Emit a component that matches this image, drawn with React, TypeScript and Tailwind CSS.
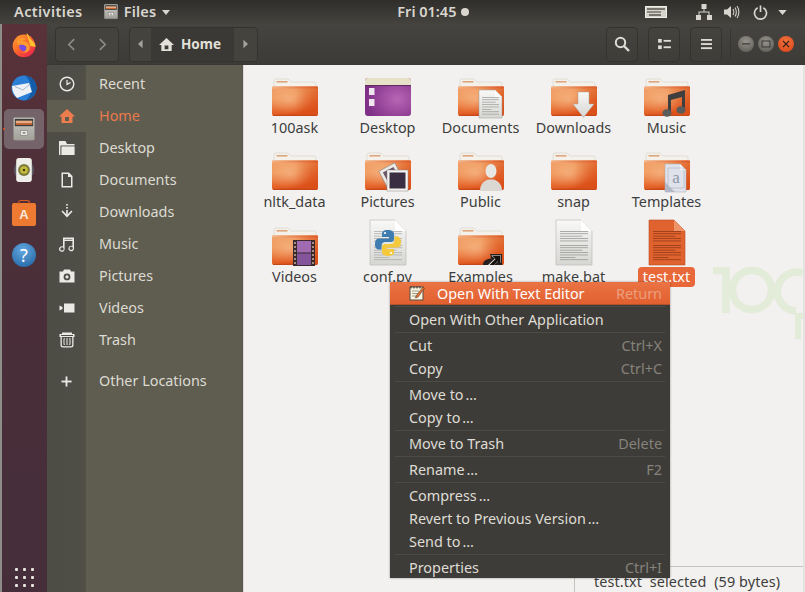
import React from "react";

const Defs = () => (
  <svg className="absolute w-0 h-0">
    <defs>
      <linearGradient id="fold" x1="0" y1="0" x2="0.35" y2="1">
        <stop offset="0" stopColor="#f2a26b" />
        <stop offset="0.4" stopColor="#ee9356" />
        <stop offset="0.75" stopColor="#e66a30" />
        <stop offset="1" stopColor="#dd5019" />
      </linearGradient>
      <radialGradient id="foldHi" cx="0.38" cy="0.45" r="0.5">
        <stop offset="0" stopColor="#ffd9b0" stopOpacity="0.45" />
        <stop offset="1" stopColor="#ffd9b0" stopOpacity="0" />
      </radialGradient>
      <linearGradient id="foldRight" x1="0" y1="0" x2="1" y2="0">
        <stop offset="0.5" stopColor="#d9501a" stopOpacity="0" />
        <stop offset="1" stopColor="#d9501a" stopOpacity="0.6" />
      </linearGradient>
      <linearGradient id="foldTop" x1="0" y1="0" x2="1" y2="0">
        <stop offset="0" stopColor="#f3b385" />
        <stop offset="1" stopColor="#dd5a26" />
      </linearGradient>
      <radialGradient id="purp" cx="0.7" cy="0.55" r="0.7">
        <stop offset="0" stopColor="#b865b5" />
        <stop offset="1" stopColor="#7e2f86" />
      </radialGradient>
      <linearGradient id="page" x1="0" y1="0" x2="0" y2="1">
        <stop offset="0" stopColor="#f8f8f7" />
        <stop offset="1" stopColor="#d6d6d3" />
      </linearGradient>
      <linearGradient id="ffx" x1="0" y1="0" x2="0.8" y2="1">
        <stop offset="0" stopColor="#ffa52e" />
        <stop offset="0.5" stopColor="#ff6a2b" />
        <stop offset="1" stopColor="#e6214f" />
      </linearGradient>
      <radialGradient id="winbtn" cx="0.5" cy="0.35" r="0.7">
        <stop offset="0" stopColor="#96948c" />
        <stop offset="1" stopColor="#5f5d57" />
      </radialGradient>
      <radialGradient id="winclose" cx="0.5" cy="0.35" r="0.7">
        <stop offset="0" stopColor="#f3743f" />
        <stop offset="1" stopColor="#d9481a" />
      </radialGradient>
      <linearGradient id="drawer" x1="0" y1="0" x2="0" y2="1">
        <stop offset="0" stopColor="#c9c8c2" />
        <stop offset="1" stopColor="#a09f98" />
      </linearGradient>
    </defs>
  </svg>
);

const IconBox = ({ children }: { children: React.ReactNode }) => (
  <svg viewBox="0 0 46 48" className="w-[46px] h-[48px] overflow-visible shrink-0">
    {children}
  </svg>
);

const FolderBase = () => (
  <>
    <path d="M2 20V13a2 2 0 0 1 2-2h12l3 3h23a2 2 0 0 1 2 2v4z" fill="#f4f1ea" stroke="#cfc9bd" strokeWidth="0.5" />
    <rect x="4.5" y="13" width="11" height="1.6" fill="#dda67e" />
    <rect x="0" y="18.5" width="46" height="29.5" rx="2" fill="url(#fold)" />
    <rect x="0" y="18.5" width="46" height="29.5" rx="2" fill="url(#foldHi)" />
    <rect x="0" y="18.5" width="46" height="29.5" rx="2" fill="url(#foldRight)" />
    <rect x="0" y="18.5" width="46" height="2" fill="url(#foldTop)" />
    <rect x="1" y="46.8" width="44" height="1.2" fill="#c4481a" />
  </>
);

const Folder = ({ children }: { children?: React.ReactNode }) => (
  <IconBox>
    <FolderBase />
    {children}
  </IconBox>
);

const TextLines = ({ x, y, w, n, color, gap = 2.4 }: { x: number; y: number; w: number; n: number; color: string; gap?: number }) => (
  <>
    {Array.from({ length: n }).map((_, i) => (
      <rect key={i} x={x} y={y + i * gap} width={i % 6 === 5 ? w * 0.55 : i % 3 === 2 ? w * 0.8 : w} height="0.7" fill={color} />
    ))}
  </>
);

const PageIcon = ({ fill, fold, stroke, line, children }: { fill: string; fold: string; stroke: string; line: string; children?: React.ReactNode }) => (
  <IconBox>
    <path d="M5 3H30L41 14V48H5Z" fill={fill} stroke={stroke} strokeWidth="0.6" />
    <path d="M30 3V14H41Z" fill={fold} />
    <TextLines x={9} y={14} w={28} n={5} color={line} />
    <TextLines x={9} y={28} w={28} n={7} color={line} />
    {children}
  </IconBox>
);

const PY_BLUE = "M0 -13C-5 -13 -6 -11 -6 -9V-6H1V-4.5H-9C-12 -4.5 -13 -2 -13 1C-13 4 -12 6.5 -9 6.5H-6.5V3C-6.5 .5 -5 -1 -2.5 -1H3C5 -1 6 -2.5 6 -4V-9C6 -11 4 -13 0 -13Z";

const files: { label: string; icon: React.ReactNode; selected?: boolean }[] = [
  { label: "100ask", icon: <Folder /> },
  {
    label: "Desktop",
    icon: (
      <IconBox>
        <rect x="0" y="10" width="46" height="38" rx="3" fill="url(#purp)" />
        <path d="M0 13a3 3 0 0 1 3-3h40a3 3 0 0 1 3 3v4H0z" fill="#e6e2c8" />
        <rect x="0" y="17" width="46" height="1" fill="#5f2a63" />
        <rect x="4" y="20" width="5.5" height="7" fill="#efe6ef" />
        <rect x="4" y="31" width="5.5" height="7" fill="#efe6ef" />
      </IconBox>
    ),
  },
  {
    label: "Documents",
    icon: (
      <Folder>
        <path d="M21 22H37L44 29V50H21Z" fill="url(#page)" stroke="#9a9a96" strokeWidth="0.5" />
        <path d="M37 22V29H44Z" fill="#fff" />
        <TextLines x={24} y={29} w={17} n={8} color="#9b9b98" />
      </Folder>
    ),
  },
  {
    label: "Downloads",
    icon: (
      <Folder>
        <polygon points="27,24 38,24 38,36 43,36 32.5,49.5 22,36 27,36" fill="url(#page)" stroke="#a8a59f" strokeWidth="0.5" />
      </Folder>
    ),
  },
  {
    label: "Music",
    icon: (
      <Folder>
        <path d="M24 27L41 22V42H38V29L27 32V45H24Z" fill="#3f3f3f" />
        <ellipse cx="23" cy="45" rx="4.5" ry="3.8" fill="#5b5b5b" />
        <ellipse cx="37" cy="42" rx="4.5" ry="3.8" fill="#5b5b5b" />
      </Folder>
    ),
  },
  { label: "nltk_data", icon: <Folder /> },
  {
    label: "Pictures",
    icon: (
      <Folder>
        <rect x="17" y="24" width="18" height="18" transform="rotate(-28 26 33)" fill="#eeeae6" stroke="#777" strokeWidth="0.5" />
        <rect x="20" y="27" width="12" height="12" transform="rotate(-28 26 33)" fill="#6a5468" />
        <rect x="22" y="28" width="21" height="21" fill="#f5f3ef" stroke="#888" strokeWidth="0.5" />
        <rect x="24.5" y="30.5" width="16" height="16" fill="#3a2f42" />
      </Folder>
    ),
  },
  {
    label: "Public",
    icon: (
      <Folder>
        <ellipse cx="33" cy="29" rx="5.5" ry="7" fill="#e8e6e2" />
        <path d="M22 49C22 42 26 39 30 37.5H36C40 39 44 42 44 49Z" fill="#dbd8d3" />
      </Folder>
    ),
  },
  { label: "snap", icon: <Folder /> },
  {
    label: "Templates",
    icon: (
      <Folder>
        <path d="M21 22H36L42 28V50H21Z" fill="#dfe2ea" stroke="#a6aab6" strokeWidth="0.5" />
        <path d="M36 22V28H42Z" fill="#f5f6f9" />
        <rect x="24" y="26" width="16" height="20" fill="none" stroke="#aab0c0" strokeWidth="0.6" />
        <text x="32" y="41" fontSize="17" fill="#8f96a8" textAnchor="middle" fontFamily="'Liberation Serif', serif">a</text>
        <path d="M21 40L31 50H21Z" fill="#b2b7c6" />
      </Folder>
    ),
  },
  {
    label: "Videos",
    icon: (
      <Folder>
        <rect x="21" y="23" width="22" height="26" fill="#3a2a30" />
        <rect x="25" y="24" width="14" height="11.5" fill="#a06bb0" />
        <rect x="25" y="36.5" width="14" height="11.5" fill="#84559a" />
        <g fill="#a89080">
          {[25, 29, 33, 37, 41, 45].map((y) => (
            <React.Fragment key={y}>
              <rect x="22" y={y} width="2" height="2" />
              <rect x="40" y={y} width="2" height="2" />
            </React.Fragment>
          ))}
        </g>
      </Folder>
    ),
  },
  {
    label: "conf.py",
    icon: (
      <PageIcon fill="url(#page)" fold="#fff" stroke="#b5b5b2" line="#a8a8a5">
        <g transform="translate(23 26)">
          <path d={PY_BLUE} fill="#3f7cb0" />
          <circle cx="-3" cy="-10" r="1.1" fill="#fff" />
          <g transform="rotate(180)">
            <path d={PY_BLUE} fill="#f4c93d" />
            <circle cx="-3" cy="-10" r="1.1" fill="#fff" />
          </g>
        </g>
      </PageIcon>
    ),
  },
  {
    label: "Examples",
    icon: (
      <Folder>
        <path d="M32 37H44V48H25C25 44 28 42 33 41.5Z" fill="#26201e" />
        <path d="M33 38.5H43V46L40.5 44L36 48H30L37 41.5Z" fill="#f4f0ee" />
        <path d="M34.5 39H42.5V47L39.8 44.3L36 48H31.5L37.5 42Z" fill="#15110f" />
      </Folder>
    ),
  },
  { label: "make.bat", icon: <PageIcon fill="url(#page)" fold="#fff" stroke="#b5b5b2" line="#8f8f8c" /> },
  { label: "test.txt", selected: true, icon: <PageIcon fill="#e0632f" fold="#ef9468" stroke="#b84c1f" line="#8a3614" /> },
];

const S = ({ children }: { children: React.ReactNode }) => (
  <svg viewBox="0 0 16 16" className="w-4 h-4" fill="currentColor">
    {children}
  </svg>
);

const sidebar: { label: string; icon: React.ReactNode; active?: boolean }[] = [
  {
    label: "Recent",
    icon: (
      <S>
        <circle cx="8" cy="8" r="6.8" fill="none" stroke="currentColor" strokeWidth="1.4" />
        <path d="M8 4V8.4L11.5 6.5" fill="none" stroke="currentColor" strokeWidth="1.2" />
      </S>
    ),
  },
  {
    label: "Home",
    active: true,
    icon: (
      <S>
        <path fillRule="evenodd" d="M8 1L16 8.5H13.5V15H2.5V8.5H0ZM6 9V13H10V9Z" />
      </S>
    ),
  },
  {
    label: "Desktop",
    icon: (
      <S>
        <path d="M0 1H6.5L8 4H15.5V5.4H1.4V15H0Z" />
        <rect x="2.4" y="6.4" width="13.2" height="8.6" />
      </S>
    ),
  },
  {
    label: "Documents",
    icon: (
      <S>
        <path fillRule="evenodd" d="M2.5 0.5H10L13.5 4V15.5H2.5ZM4 2V14H12V5H9V2Z" />
      </S>
    ),
  },
  {
    label: "Downloads",
    icon: (
      <S>
        <rect x="7.2" y="0" width="1.6" height="1.6" />
        <rect x="7.2" y="3" width="1.6" height="1.6" />
        <rect x="7.2" y="6" width="1.6" height="5" />
        <path d="M2.5 7.5L8 13.5L13.5 7.5L12.4 6.5L8 11L3.6 6.5Z" />
      </S>
    ),
  },
  {
    label: "Music",
    icon: (
      <S>
        <path fillRule="evenodd" d="M4 1.5H15V12.5A2.8 2.8 0 1 1 13.4 10V5H5.6V13A2.8 2.8 0 1 1 4 10.5ZM5.6 3V3.6H13.4V3ZM3 11.2A1.7 1.7 0 1 0 3 14.6A1.7 1.7 0 1 0 3 11.2ZM12.2 10.6A1.7 1.7 0 1 0 12.2 14A1.7 1.7 0 1 0 12.2 10.6Z" />
      </S>
    ),
  },
  {
    label: "Pictures",
    icon: (
      <S>
        <path fillRule="evenodd" d="M5 1.5H11L12 3.5H15.5V14.5H0.5V3.5H4ZM8 5.5A3.4 3.4 0 1 0 8 12.3A3.4 3.4 0 1 0 8 5.5Z" />
        <circle cx="8" cy="8.9" r="1.6" />
      </S>
    ),
  },
  {
    label: "Videos",
    icon: (
      <S>
        <rect x="5" y="3.5" width="10.5" height="9" />
        <path d="M0.5 5.5L3.5 7V9L0.5 10.5Z" />
      </S>
    ),
  },
  {
    label: "Trash",
    icon: (
      <S>
        <path fillRule="evenodd" d="M3 0.5H13V2H15.5V5H14.5V13A2.5 2.5 0 0 1 12 15.5H4A2.5 2.5 0 0 1 1.5 13V5H0.5V2H3ZM2.8 5V13A1.2 1.2 0 0 0 4 14.2H12A1.2 1.2 0 0 0 13.2 13V5ZM2 3V4H14V3Z" />
        <path d="M4.8 6C4.3 8.5 4.3 10.5 4.8 13H5.8C5.3 10.5 5.3 8.5 5.8 6ZM7.5 6V13H8.5V6ZM10.2 6C10.7 8.5 10.7 10.5 10.2 13H11.2C11.7 10.5 11.7 8.5 11.2 6Z" />
      </S>
    ),
  },
];

const FilesIcon = ({ size }: { size: number }) => (
  <svg viewBox="0 0 24 26" width={size} height={size * 26 / 24}>
    <rect x="0.5" y="0.5" width="23" height="25" rx="1.5" fill="url(#drawer)" stroke="#8b8a83" strokeWidth="0.5" />
    <rect x="2" y="2" width="20" height="8" fill="#3c3b38" />
    <rect x="3" y="4" width="18" height="3" fill="#e9ad84" />
    <rect x="3" y="7" width="18" height="1.5" fill="#e26b2f" />
    <rect x="8" y="15" width="8" height="5" fill="#e8e7e2" stroke="#77766f" strokeWidth="0.6" />
    <rect x="10.5" y="16.8" width="3" height="1.2" fill="#55544e" />
  </svg>
);

const Dock = () => (
  <div className="w-[45px] shrink-0 h-full pr-[1px] flex flex-col items-center bg-[linear-gradient(180deg,#5a3239_0%,#4c2f39_30%,#452e3a_100%)]">
    <div className="h-[42px] flex items-center justify-center">
      <svg viewBox="0 0 26 26" className="w-[25px] h-[26px]">
        <circle cx="12.5" cy="14" r="11.8" fill="url(#ffx)" />
        <path d="M15 0.5C18 2.5 17.5 5.5 20 7.5C23 10 24.5 12 24.5 15L19 14Z" fill="#ffc02e" />
        <circle cx="12.5" cy="14.5" r="5" fill="#7a4be0" />
        <path d="M5 8.5C8 5.5 12 5 15 7C12.5 7 11 8 11 9.2C14 9 18.5 11 18.5 15.5C18.5 19.5 14.5 21.5 10.5 20.5C13.5 20 15.5 18 14.8 15C14 12.5 9 12.5 5.5 13Z" fill="#ff9a2e" />
      </svg>
    </div>
    <div className="h-[43px] flex items-center justify-center">
      <svg viewBox="0 0 26 26" className="w-[26px] h-[26px]">
        <circle cx="13" cy="13" r="12.5" fill="#2c7fd6" />
        <path d="M14 0.5C20 1 25.5 6 25.5 13C25.5 19 21 23.5 15 25.5C19 21 21 17 20 11C19.5 7 17 3 14 0.5Z" fill="#155ca8" />
        <path d="M1 11L18 8L21 17L6 23C3 20 1 16 1 11Z" fill="#eef2f7" />
        <path d="M4 11.5L12 15L19 9" fill="none" stroke="#a9b8cb" strokeWidth="1" />
      </svg>
    </div>
    <div className="w-[40px] h-[40px] shrink-0 rounded-[5px] bg-[#75636a] flex items-center justify-center relative">
      <span className="absolute left-[-1px] top-[19px] w-[2px] h-[2px] rounded-full bg-[#e95420]" />
      <FilesIcon size={22} />
    </div>
    <div className="h-[42px] flex items-center justify-center">
      <svg viewBox="0 0 24 28" className="w-[22px] h-[26px]">
        <circle cx="12" cy="14" r="11" fill="#5f5a66" />
        <rect x="3.5" y="1" width="17" height="26" rx="3" fill="#efefe9" />
        <circle cx="12" cy="14" r="6.5" fill="#7d7a3d" />
        <circle cx="12" cy="14" r="4.2" fill="#c7bb3a" />
        <circle cx="12" cy="14" r="1.4" fill="#3e3c1e" />
      </svg>
    </div>
    <div className="h-[45px] flex items-center justify-center">
      <div className="relative w-[24px] h-[23px] mt-[2px] rounded-[2px] bg-[#ed7a30] flex items-center justify-center">
        <span className="absolute top-[-3px] left-[6px] w-[12px] h-[4px] rounded-t-[3px] border-[1.5px] border-b-0 border-[#d9591f]" />
        <span className="text-[13px] font-bold text-[#fbe9dc] font-['Liberation_Sans',sans-serif] leading-none">A</span>
      </div>
    </div>
    <div className="h-[38px] flex items-center justify-center">
      <div className="w-[24px] h-[24px] rounded-full bg-[radial-gradient(circle_at_45%_30%,#63a9e0,#1c5d9e)] flex items-center justify-center text-white text-[18px] leading-none font-['Noto_Sans',sans-serif]">?</div>
    </div>
    <div className="mt-auto mb-[5px] grid grid-cols-3 gap-x-[5px] gap-y-[5px]">
      {Array.from({ length: 9 }).map((_, i) => (
        <span key={i} className="w-[3px] h-[3px] bg-[#e6e4df] rounded-[1px]" />
      ))}
    </div>
  </div>
);

const HeaderBtn = ({ children }: { children: React.ReactNode }) => (
  <div className="w-[32px] h-[35px] rounded-[4px] border border-[#35332f] bg-[linear-gradient(180deg,#45433e,#3f3d39)] flex items-center justify-center text-[#dedcd5]">
    {children}
  </div>
);

const WinBtn = ({ fill, children }: { fill: string; children: React.ReactNode }) => (
  <svg viewBox="0 0 16 16" className="w-4 h-4">
    <circle cx="8" cy="8" r="8" fill={fill} />
    {children}
  </svg>
);

const Header = () => (
  <div className="h-[41px] shrink-0 flex items-center pl-[8px] pr-[11px] bg-[linear-gradient(180deg,#464440,#3d3b37)] border-b border-[#3a3834]">
    <div className="w-[64px] h-[35px] rounded-[4px] border border-[#35332f] bg-[#45433e] flex items-center justify-around text-[#8e8c85]">
      <svg viewBox="0 0 10 14" className="w-[9px] h-[13px]" fill="none" stroke="currentColor" strokeWidth="1.8"><path d="M8 1L2 7L8 13" /></svg>
      <svg viewBox="0 0 10 14" className="w-[9px] h-[13px]" fill="none" stroke="currentColor" strokeWidth="1.8"><path d="M2 1L8 7L2 13" /></svg>
    </div>
    <div className="ml-[10px] w-[129px] h-[35px] rounded-[4px] border border-[#35332f] bg-[#45433e] flex items-center">
      <div className="w-[21px] flex justify-center text-[#a5a39c]">
        <svg viewBox="0 0 6 10" className="w-[5px] h-[10px]" fill="currentColor"><path d="M5.5 0V10L0 5Z" /></svg>
      </div>
      <div className="w-[83px] h-full bg-[#3b3935] flex items-center pl-[8px] gap-[7px] text-[#e2e0d9]">
        <svg viewBox="0 0 16 16" className="w-[15px] h-[15px]" fill="currentColor"><path fillRule="evenodd" d="M8 1L16 8.5H13.5V15H2.5V8.5H0ZM6 9V13H10V9Z" /></svg>
        <span className="font-bold text-[13.5px]">Home</span>
      </div>
      <div className="flex-1 flex justify-center text-[#a5a39c]">
        <svg viewBox="0 0 6 10" className="w-[5px] h-[10px]" fill="currentColor"><path d="M0.5 0V10L6 5Z" /></svg>
      </div>
    </div>
    <div className="ml-auto flex items-center gap-[10px]">
      <HeaderBtn>
        <svg viewBox="0 0 16 16" className="w-[16px] h-[16px]" fill="none" stroke="currentColor" strokeWidth="2"><circle cx="6.5" cy="6.5" r="4.7" /><path d="M10 10L15 15" strokeWidth="2.4" /></svg>
      </HeaderBtn>
      <HeaderBtn>
        <svg viewBox="0 0 14 12" className="w-[13px] h-[11px]" fill="currentColor"><rect x="0" y="0" width="4" height="4" /><rect x="0" y="7" width="4" height="4" /><rect x="6" y="1" width="8" height="2" /><rect x="6" y="8" width="8" height="2" /></svg>
      </HeaderBtn>
      <HeaderBtn>
        <svg viewBox="0 0 12 12" className="w-[11px] h-[11px]" fill="currentColor"><rect y="0" width="12" height="2" /><rect y="4.5" width="12" height="2" /><rect y="9" width="12" height="2" /></svg>
      </HeaderBtn>
    </div>
    <div className="w-px h-[30px] bg-[#37352f] ml-[8px] mr-[7px]" />
    <div className="flex items-center gap-[4px]">
      <WinBtn fill="url(#winbtn)"><rect x="4" y="7.3" width="8" height="1.2" fill="#3a3834" /></WinBtn>
      <WinBtn fill="url(#winbtn)"><rect x="4" y="5" width="8" height="6" fill="none" stroke="#3a3834" strokeWidth="1" /></WinBtn>
      <WinBtn fill="url(#winclose)"><path d="M5 5L11 11M11 5L5 11" stroke="#3a2018" strokeWidth="1.2" /></WinBtn>
    </div>
  </div>
);

const Sidebar = () => (
  <div className="w-[196px] shrink-0 h-full pt-[3px] text-[14.4px] text-[#dddbd3] border-r border-[#59574c] bg-[linear-gradient(90deg,#4d4c45_0,#4f4e47_38px,#45443d_38px,#5f5d50_39px,#5f5d50_100%)]">
    {sidebar.map((s) => (
      <div key={s.label} className="flex h-[32px] items-center">
        <div className={`w-[39px] h-full flex items-center justify-center ${s.active ? "bg-[#5f5d50] text-[#ed7d4f]" : "text-[#eceae4]"}`}>{s.icon}</div>
        <span className={`pl-[13px] ${s.active ? "text-[#ea7a4c]" : ""}`}>{s.label}</span>
      </div>
    ))}
    <div className="flex h-[32px] items-center mt-[9px]">
      <div className="w-[39px] h-full flex items-center justify-center text-[#eceae4]">
        <svg viewBox="0 0 12 12" className="w-[11px] h-[11px]" fill="currentColor"><rect x="5" y="0.5" width="2" height="11" /><rect x="0.5" y="5" width="11" height="2" /></svg>
      </div>
      <span className="pl-[13px]">Other Locations</span>
    </div>
  </div>
);

const Sep = () => (
  <div className="h-[3px] flex items-center px-[5px]">
    <div className="h-px w-full bg-[#4d4b46]" />
  </div>
);

const Item = ({ label, key2, last }: { label: string; key2?: string; last?: boolean }) => (
  <div className={`${last ? "h-[22px]" : "h-[23px]"} pt-[2px] flex items-center justify-between pl-[19px] pr-[8px]`}>
    {label.endsWith("…") ? (
      <span>
        {label.slice(0, -1)}
        <span className="ml-[2px]">…</span>
      </span>
    ) : (
      <span>{label}</span>
    )}
    {key2 && <span className="text-[#85837b]">{key2}</span>}
  </div>
);

const ContextMenu = () => (
  <div className="absolute left-[390px] top-[282px] w-[280px] h-[296px] bg-[#3e3c38] text-[14.4px] leading-none text-[#dedcd5] shadow-[0_0_2px_rgba(0,0,0,0.4)]">
    <div className="h-[23px] pt-[2px] bg-[linear-gradient(180deg,#ea7344,#e2602f)] border-b border-[#b3522d] flex items-center pl-[19px] pr-[8px]">
      <svg viewBox="0 0 16 16" className="w-[16px] h-[16px] mr-[12px] shrink-0 -mt-[2px]">
        <rect x="1" y="2" width="13" height="13" fill="#f7f3df" stroke="#55514a" strokeWidth="1" />
        <path d="M2 1V3.5M5 1V3.5M8 1V3.5M11 1V3.5" stroke="#3b3833" strokeWidth="1" />
        <path d="M3 6H10M3 8.5H9M3 11H8" stroke="#8a8678" strokeWidth="0.8" />
        <path d="M7 11L14 2L15.5 3.2L9 12L6.5 13Z" fill="#e8743c" stroke="#5a3a22" strokeWidth="0.6" />
      </svg>
      <span className="text-white">Open With Text Editor</span>
      <span className="ml-auto text-[#ec9f7d]">Return</span>
    </div>
    <Sep />
    <Item label="Open With Other Application" />
    <Sep />
    <Item label="Cut" key2="Ctrl+X" />
    <Item label="Copy" key2="Ctrl+C" />
    <Sep />
    <Item label="Move to…" />
    <Item label="Copy to…" />
    <Sep />
    <Item label="Move to Trash" key2="Delete" />
    <Sep />
    <Item label="Rename…" key2="F2" />
    <Sep />
    <Item label="Compress…" />
    <Item label="Revert to Previous Version…" />
    <Item label="Send to…" />
    <Sep />
    <Item label="Properties" key2="Ctrl+I" last />
  </div>
);

const TopBar = () => (
  <div className="h-[24px] shrink-0 flex items-center pl-[14px] pr-[18px] text-[14.5px] text-[#d8d6cf] whitespace-nowrap bg-[linear-gradient(180deg,#2f2e2b,#45433e)]">
    <span className="font-semibold tracking-[0.4px]">Activities</span>
    <span className="ml-[21px]"><FilesIcon size={14} /></span>
    <span className="ml-[6px] font-semibold tracking-[0.2px]">Files</span>
    <svg viewBox="0 0 8 5" className="w-[8px] h-[5px] ml-[6px] shrink-0" fill="currentColor"><path d="M0 0H8L4 5Z" /></svg>
    <span className="ml-[227px] font-semibold shrink-0">Fri 01:45</span>
    <span className="ml-[5px] w-[8px] h-[8px] rounded-full bg-[#d8d6cf] shrink-0" />
    <svg viewBox="0 0 22 12" className="ml-auto w-[22px] h-[12px] shrink-0">
      <rect x="0.5" y="0.5" width="21" height="11" fill="#d5d3cc" stroke="#efeee8" strokeWidth="1" />
      <rect x="2" y="2" width="18" height="2" fill="#76746c" />
      <rect x="2" y="5" width="14" height="2" fill="#8b8981" />
      <rect x="4" y="8" width="12" height="2" fill="#76746c" />
    </svg>
    <svg viewBox="0 0 16 16" className="ml-[29px] w-[16px] h-[16px] shrink-0" fill="currentColor">
      <rect x="5.5" y="0" width="5" height="5" />
      <rect x="0" y="11" width="5" height="5" />
      <rect x="11" y="11" width="5" height="5" />
      <path d="M7.5 5H8.5V7.5H13.5V11H12.5V8.5H3.5V11H2.5V7.5H7.5Z" />
    </svg>
    <svg viewBox="0 0 16 14" className="ml-[12px] w-[16px] h-[14px] shrink-0" fill="currentColor">
      <path d="M0 4.5H3L7 1V13L3 9.5H0Z" />
      <path d="M9 4C10 5.5 10 8.5 9 10M11 2.5C12.8 5 12.8 9 11 11.5M13 1C15.5 4.5 15.5 9.5 13 13" fill="none" stroke="currentColor" strokeWidth="1.1" />
    </svg>
    <svg viewBox="0 0 16 16" className="ml-[13px] w-[15px] h-[15px] shrink-0" fill="none" stroke="currentColor" strokeWidth="1.8">
      <path d="M5 3A6.4 6.4 0 1 0 11 3" />
      <path d="M8 0.5V7.5" />
    </svg>
    <svg viewBox="0 0 10 6" className="ml-[10px] w-[9px] h-[5px] shrink-0" fill="currentColor"><path d="M0 0H10L5 6Z" /></svg>
  </div>
);

export default function App() {
  return (
    <div className="relative w-[805px] h-[592px] overflow-hidden flex flex-col bg-[#3d3b37] font-['Noto_Sans','Open_Sans',sans-serif]">
      <Defs />
      <TopBar />
      <div className="flex flex-1 min-h-0">
        <div className="w-[2px] shrink-0 bg-[#8f8d8a]" />
        <Dock />
        <div className="flex-1 flex flex-col min-w-0">
          <Header />
          <div className="flex flex-1 min-h-0">
            <Sidebar />
            <div className="w-[1px] shrink-0 bg-[#dcdbd8]" />
            <div className="relative flex-1 overflow-hidden bg-[#f2f1ef] pt-[3px] pl-[4px]">
              <svg viewBox="0 0 90 72" className="absolute left-[469px] top-[202px] w-[90px] h-[72px]" fill="none" stroke="#e3ebd9" strokeWidth="7.5">
                <path d="M0 3.5H13V46" />
                <circle cx="39" cy="23" r="19.5" />
                <path d="M83 44A19.5 19.5 0 1 1 90 6" />
                <path d="M90 49H85V72" strokeWidth="6" />
              </svg>
              <div className="relative grid grid-cols-[repeat(5,93px)] grid-rows-[74px_75px_75px]">
                {files.map((f) => (
                  <div key={f.label} className="flex flex-col items-center">
                    {f.icon}
                    <span className={`mt-[2px] h-[20px] leading-[20px] text-[14.4px] rounded-[4px] ${f.selected ? "bg-[#e9683a] text-white px-[5px]" : "text-[#3d3d3d]"}`}>{f.label}</span>
                  </div>
                ))}
              </div>
              <div className="absolute right-[2px] left-[330px] bottom-0 h-[26px] bg-[#f2f1ef] border-t border-l border-[#c5c4c0] pl-[19px] text-[14.4px] tracking-[0.1px] leading-[29px] text-[#3d3d3d] whitespace-pre">test.txt  selected  (59 bytes)</div>
              <div className="absolute right-0 top-0 bottom-0 w-[2px] bg-[#e4e3e1]" />
            </div>
          </div>
        </div>
      </div>
      <ContextMenu />
    </div>
  );
}
